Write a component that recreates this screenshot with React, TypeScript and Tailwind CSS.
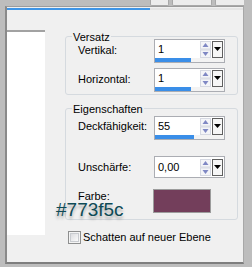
import React from "react";

function Arrows() {
  return (
    <svg width="11" height="17" viewBox="0 0 11 17" className="block">
      <rect x="0" y="0" width="11" height="17" fill="#eef0f4" />
      <rect x="0.5" y="0.5" width="10" height="7.5" fill="#f4f5f8" stroke="#d6d9e2" />
      <rect x="0.5" y="9" width="10" height="7.5" fill="#f4f5f8" stroke="#d6d9e2" />
      <path d="M5.5 2 L8.5 6 L2.5 6 Z" fill="#7f88c4" />
      <path d="M2.5 11 L8.5 11 L5.5 15 Z" fill="#7f88c4" />
    </svg>
  );
}

function DropBtn() {
  return (
    <div className="w-[11px] h-[17px] border border-[#5f5f5f] bg-[#f6f6f6] flex items-center justify-center">
      <svg width="7" height="4" viewBox="0 0 7 4" className="block">
        <path d="M0 0 L7 0 L3.5 4 Z" fill="#000" />
      </svg>
    </div>
  );
}

function Spin({ value, bar }: { value: string; bar?: number }) {
  return (
    <div className="w-[71px] border border-[#abadb3] bg-white flex flex-col">
      <div className={"flex items-center " + (bar !== undefined ? "h-[18px]" : "h-[20px]")}>
        <span className="flex-1 pl-[3px] text-[11px] leading-none text-black">{value}</span>
        <Arrows />
        <div className="w-px" />
        <DropBtn />
        <div className="w-px" />
      </div>
      {bar !== undefined && (
        <div className="h-[4px] bg-[#f3f3f3] flex">
          <div className="h-full bg-[#3a8ee8]" style={{ width: bar }} />
        </div>
      )}
    </div>
  );
}

function Group({ title, children, className }: { title: string; children: React.ReactNode; className: string }) {
  return (
    <div className={"relative w-[173px] border border-[#d5dadf] rounded-[3px] " + className}>
      <span className="absolute left-[6px] top-[-6px] bg-[#f0f0f0] px-px text-[11px] leading-[13px] text-black">
        {title}
      </span>
      {children}
    </div>
  );
}

export default function App() {
  return (
    <div className="relative w-[252px] h-[267px] bg-[#bdbdbd] flex flex-col pl-[5px] pr-[8px] pb-[3px] overflow-hidden font-['Liberation_Sans',Arial,sans-serif]">
      {/* top strip with tab bottoms */}
      <div className="h-[6px] flex">
        <div className="w-[145px]" />
        <div className="w-[19px] bg-[#ececec] border-x border-b border-[#a8a8a8] rounded-b-[2px]" />
        <div className="w-[3px]" />
        <div className="w-[40px] bg-[#ececec] border-x border-b border-[#a8a8a8] rounded-b-[2px]" />
        <div className="w-[3px]" />
        <div className="flex-1 bg-[#ececec] border-l border-b border-[#a8a8a8] rounded-bl-[2px]" />
      </div>
      {/* panel */}
      <div className="flex-1 flex flex-col bg-[#f0f0f0] border-l-2 border-t border-r border-b-2 border-l-[#8a8a8a] border-t-[#9c9c9c] border-r-[#a8a8a8] border-b-[#7e7e7e]">
        <div className="h-px" />
        <div className="flex h-[2px]">
          <div className="w-[143px] bg-[#3f95e6]" />
          <div className="flex-1 bg-[#e4e4e4]" />
        </div>
        <div className="flex items-start">
          {/* left white preview */}
          <div className="mt-[20px] w-[38px] h-[205px] bg-white border-t-2 border-[#a2a2a2]" />
          {/* right column */}
          <div className="ml-[20px] mt-[26px] flex flex-col">
            <Group title="Versatz" className="pt-[2px] pb-[2px] pl-[12px] flex flex-col gap-[5px]">
              <div className="flex items-start">
                <span className="w-[76px] mt-[2px] text-[11px] leading-[18px] text-black">Vertikal:</span>
                <Spin value="1" bar={36} />
              </div>
              <div className="flex items-start">
                <span className="w-[76px] mt-[2px] text-[11px] leading-[18px] text-black">Horizontal:</span>
                <Spin value="1" bar={36} />
              </div>
            </Group>
            <Group title="Eigenschaften" className="mt-[13px] pt-[7px] pb-[6px] pl-[12px] flex flex-col">
              <div className="flex items-start">
                <span className="w-[76px] mt-[1px] text-[11px] leading-[18px] text-black">Deckfähigkeit:</span>
                <Spin value="55" bar={39} />
              </div>
              <div className="flex items-center mt-[16px]">
                <span className="w-[76px] text-[11px] leading-[18px] text-black">Unschärfe:</span>
                <Spin value="0,00" />
              </div>
              <div className="flex items-start mt-[11px]">
                <span className="w-[75px] mt-[1px] text-[11px] leading-[12px] text-black">Farbe:</span>
                <div className="w-[58px] h-[24px] bg-[#733e5b] border border-[#9c9c9c]" />
              </div>
            </Group>
            <div className="mt-[11px] pl-[3px] flex items-center">
              <div className="w-[13px] h-[13px] border border-[#8e8f8f] bg-[#f4f4f4] p-px">
                <div className="w-full h-full border border-[#c9ccd0] bg-gradient-to-br from-[#dcdde0] to-[#fbfbfb]" />
              </div>
              <span className="ml-[2px] text-[11px] leading-[13px] text-black">Schatten auf neuer Ebene</span>
            </div>
          </div>
        </div>
      </div>
      {/* annotation overlay */}
      <span className="absolute left-[56px] top-[203px] text-[19px] leading-[14px] text-[#0e4a56] [text-shadow:0_3px_3px_rgba(0,0,0,0.3)]">
        #773f5c
      </span>
    </div>
  );
}
